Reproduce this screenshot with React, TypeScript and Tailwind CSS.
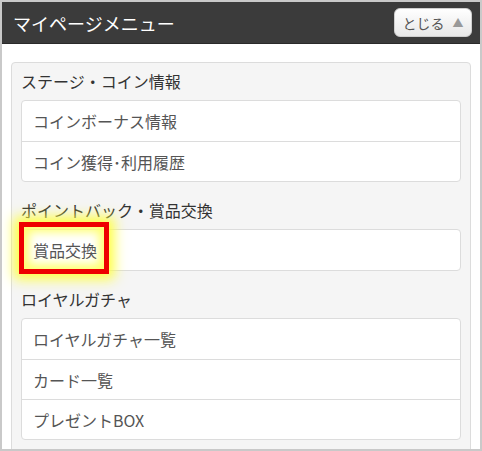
const sections = [
  { title: "ステージ・コイン情報", items: ["コインボーナス情報", "コイン獲得･利用履歴"] },
  { title: "ポイントバック・賞品交換", items: ["賞品交換"] },
  { title: "ロイヤルガチャ", items: ["ロイヤルガチャ一覧", "カード一覧", "プレゼントBOX"] },
];

export default function App() {
  return (
    <div
      className="w-[482px] h-[451px] overflow-hidden border-2 border-[#c9c9c9] bg-white"
      style={{ fontFamily: '"Noto Sans CJK JP", "Noto Sans", sans-serif' }}
    >
      <div className="h-[42px] bg-[#3b3b3b] flex items-center justify-between pl-[11px] pr-[8px] border-b border-[#2a2a2a]">
        <span className="text-white text-[18px] leading-none">マイページメニュー</span>
        <button className="h-[29px] w-[78px] rounded-[6px] border border-[#cfcfcf] bg-gradient-to-b from-white to-[#e8e8e8] flex items-center justify-center gap-[8px] text-[#555] text-[14px] leading-none">
          とじる
          <span className="text-[#999] text-[11px]">▲</span>
        </button>
      </div>

      <div className="px-[9px] pt-[18px]">
        <div className="rounded-[4px] border border-[#dcdcdc] bg-[#f5f5f5] px-[9px] pt-[6px] pb-[12px]">
          {sections.map((s) => (
            <div key={s.title} className="mb-[16px]">
              <div className="text-[16px] leading-6 text-[#333] mb-[7px]">{s.title}</div>
              <ul className="rounded-[4px] border border-[#dcdcdc] bg-white">
                {s.items.map((it, i) => (
                  <li
                    key={it}
                    className={`relative h-[40px] flex items-center pl-[11px] text-[16px] text-[#555] ${
                      i > 0 ? "border-t border-[#dcdcdc]" : ""
                    }`}
                  >
                    {it === "賞品交換" && (
                      <span className="absolute left-[-3px] top-[-8px] w-[90px] h-[52px] border-[5px] border-[#ee0000] shadow-[0_0_12px_5px_#ffff3c,inset_0_0_10px_5px_#ffff70]" />
                    )}
                    <span className="relative">{it}</span>
                  </li>
                ))}
              </ul>
            </div>
          ))}
        </div>
      </div>
    </div>
  );
}
